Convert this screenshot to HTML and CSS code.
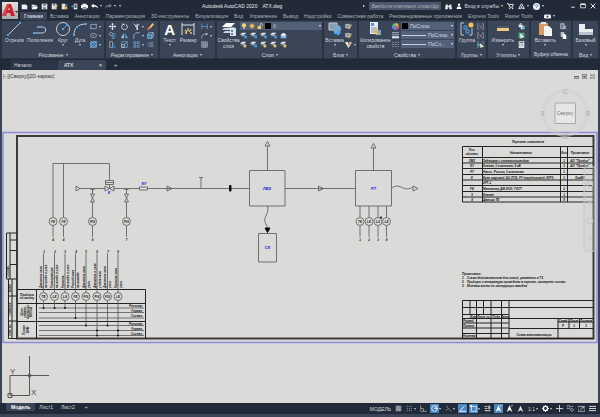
FILE: index.html
```html
<!DOCTYPE html>
<html lang="ru">
<head>
  <meta charset="UTF-8">
  <meta name="viewport" content="width=device-width, initial-scale=1.0">
  <title>Autodesk AutoCAD 2020 - АТХ.dwg</title>
  <link rel="stylesheet" href="styles.css">
</head>
<body>

<!-- Icon set -->
<svg class="sprite" aria-hidden="true">
  <symbol id="i-new" viewBox="0 0 10 10"><path d="M1 2h6l2 2v5H1z" fill="#eef1f5"/></symbol>
  <symbol id="i-open" viewBox="0 0 10 10"><path d="M1 8V2h3l1 1h3v2H3z" fill="#cfd5dd"/><path d="M3 5h7L8 9H1z" fill="#fff"/></symbol>
  <symbol id="i-save" viewBox="0 0 10 10"><path d="M1 1h8v8H1z" fill="#dfe4ea"/><path d="M3 1h4v3H3zM3 6h4v3H3z" fill="#6f7c8e"/></symbol>
  <symbol id="i-saveas" viewBox="0 0 10 10"><path d="M1 1h7v8H1z" fill="#dfe4ea"/><path d="M3 1h3v3H3z" fill="#6f7c8e"/><path d="M4 8l5-5 1 1-5 5z" fill="#e8b04c"/></symbol>
  <symbol id="i-cloud" viewBox="0 0 10 10"><path d="M1 1h5v8H1z" fill="#e6e2cf"/><path d="M5 5h4v4H5z" fill="#e0b65a"/><path d="M6 2h3v2H6z" fill="#5e9fd6"/></symbol>
  <symbol id="i-mobile" viewBox="0 0 10 10"><path d="M4 1h5v8H4z" fill="#eef1f5"/><path d="M5 2h3v5H5z" fill="#4b5a6e"/><path d="M0 5h4M2 3l2 2-2 2" stroke="#69a8dd" fill="none"/></symbol>
  <symbol id="i-print" viewBox="0 0 10 10"><path d="M2 1h6v2H2zM0 3h10v4H8v2H2V7H0z" fill="#eef1f5"/><path d="M3 6h4v2H3z" fill="#5a6678"/></symbol>
  <symbol id="i-undo" viewBox="0 0 10 10"><path d="M0 4l4-3v2c4 0 6 2 6 5-1-2-3-3-6-3v2z" fill="#fff"/></symbol>
  <symbol id="i-redo" viewBox="0 0 10 10"><path d="M10 4L6 1v2C2 3 0 5 0 8c1-2 3-3 6-3v2z" fill="#6f7b8b"/></symbol>
  <symbol id="i-binoc" viewBox="0 0 10 10"><path d="M1 2h3v2h2V2h3l1 7H6V6H4v3H0z" fill="#dfe4ea"/></symbol>
  <symbol id="i-user" viewBox="0 0 10 10"><circle cx="5" cy="3" r="2" fill="#fff"/><path d="M1 10c0-6 8-6 8 0z" fill="#fff"/></symbol>
  <symbol id="i-cart" viewBox="0 0 10 10"><path d="M0 1h2l2 5h4l1-4H3" fill="none" stroke="#e4e8ee" stroke-width="1.4"/><circle cx="4" cy="8" r="1" fill="#fff"/><circle cx="8" cy="8" r="1" fill="#fff"/></symbol>
  <symbol id="i-a360" viewBox="0 0 10 10"><path d="M5 1L1 8h3L5 5l1 3h3z" fill="none" stroke="#e4e8ee" stroke-width="1.4"/></symbol>
  <symbol id="i-help" viewBox="0 0 10 10"><circle cx="5" cy="5" r="5" fill="#eef1f5"/><path d="M3 4c0-2 4-2 4 0 0 1-2 1-2 2v1" fill="none" stroke="#2a6fae" stroke-width="1.2"/></symbol>
  <symbol id="i-min" viewBox="0 0 10 10"><path d="M2 7h6" stroke="#fff" stroke-width="1.4"/></symbol>
  <symbol id="i-max" viewBox="0 0 10 10"><path d="M1 2h8v6H1z" fill="none" stroke="#fff" stroke-width="1.2"/><path d="M1 2h8" stroke="#fff" stroke-width="2"/></symbol>
  <symbol id="i-close" viewBox="0 0 10 10"><path d="M1 1l8 8M9 1L1 9" stroke="#fff" stroke-width="1.5"/></symbol>
  <symbol id="i-cam" viewBox="0 0 10 10"><rect y="2" width="10" height="6" rx="2" fill="#eef1f5"/><circle cx="5" cy="5" r="1.4" fill="#39465a"/></symbol>

  <symbol id="i-line" viewBox="0 0 14 14"><path d="M1 13L13 1" stroke="#c9d0da"/><path d="M0 12h2v2H0zM12 0h2v2h-2z" fill="#4fa3e3"/></symbol>
  <symbol id="i-pline" viewBox="0 0 14 14"><path d="M1 11h8c5 0 5-6 0-6H5" fill="none" stroke="#c9d0da"/><path d="M0 10h2v2H0zM4 4h2v2H4z" fill="#4fa3e3"/></symbol>
  <symbol id="i-circle" viewBox="0 0 14 14"><circle cx="7" cy="7" r="6.5" fill="none" stroke="#c9d0da"/><path d="M7 7l4-4" stroke="#4fa3e3"/><path d="M6 6h2v2H6zM10 2h2v2h-2z" fill="#4fa3e3"/></symbol>
  <symbol id="i-arc" viewBox="0 0 14 14"><path d="M1 13C1 6 5 2 13 2" fill="none" stroke="#c9d0da"/><path d="M0 12h2v2H0zM3 4h2v2H3zM12 1h2v2h-2z" fill="#4fa3e3"/></symbol>
  <symbol id="i-rect" viewBox="0 0 10 10"><path d="M1 2h8v6H1z" fill="none" stroke="#b3bcc9"/><path d="M0 7h2v2H0zM8 1h2v2H8z" fill="#4fa3e3"/></symbol>
  <symbol id="i-ellipse" viewBox="0 0 10 10"><ellipse cx="5" cy="5" rx="4.5" ry="3" fill="none" stroke="#b3bcc9"/><path d="M4 4h2v2H4z" fill="#4fa3e3"/></symbol>
  <symbol id="i-hatch" viewBox="0 0 10 10"><path d="M1 1h8v8H1z" fill="#33669a" stroke="#8fc3ee"/><path d="M1 5l4-4M1 9l8-8M5 9l4-4" stroke="#9fd0f7"/></symbol>
  <symbol id="i-move" viewBox="0 0 10 10"><path d="M5 1v8M1 5h8" stroke="#fff"/><path d="M5 0l2 2H3zM5 10l2-2H3zM0 5l2-2v4zM10 5L8 3v4z" fill="#fff"/></symbol>
  <symbol id="i-rotate" viewBox="0 0 10 10"><path d="M7 2a4 4 0 1 1-4 0" fill="none" stroke="#dbe0e7" stroke-width="1.3"/><path d="M1 1h4v3z" fill="#dbe0e7"/></symbol>
  <symbol id="i-trim" viewBox="0 0 10 10"><path d="M1 1l5 5M9 2L3 5M6 1v8" stroke="#dbe0e7" stroke-width="1.3"/><path d="M5 6h2v4H5z" fill="#dbe0e7"/></symbol>
  <symbol id="i-erase" viewBox="0 0 10 10"><path d="M3 6l5-6 2 2-5 6z" fill="#efc66f"/><path d="M1 7l2-2 2 2-2 3H0z" fill="#db6a50"/></symbol>
  <symbol id="i-copy" viewBox="0 0 10 10"><circle cx="3" cy="3" r="2.3" fill="none" stroke="#b8c2ce"/><circle cx="7" cy="4" r="2" fill="none" stroke="#4fa3e3"/><circle cx="6" cy="8" r="1.6" fill="none" stroke="#69b4ee"/></symbol>
  <symbol id="i-mirror" viewBox="0 0 10 10"><path d="M4 1v8H0z" fill="#b8c2ce"/><path d="M6 1v8h4z" fill="#4fa3e3"/></symbol>
  <symbol id="i-fillet" viewBox="0 0 10 10"><path d="M1 10V7c0-4 2-6 6-6h3" fill="none" stroke="#a8b2c0"/><path d="M0 5h2v2H0zM5 0h2v2H5z" fill="#4fa3e3"/></symbol>
  <symbol id="i-explode" viewBox="0 0 10 10"><path d="M1 4h6v5H1z" fill="#2f75ae" stroke="#a9d2f2"/><path d="M1 4l2-3h6L7 4M9 1v5L7 9" fill="none" stroke="#a9d2f2"/></symbol>
  <symbol id="i-stretch" viewBox="0 0 10 10"><path d="M1 1h4v8H1z" fill="none" stroke="#b8c2ce"/><path d="M5 3l4 6H5z" fill="none" stroke="#4fa3e3"/></symbol>
  <symbol id="i-scale" viewBox="0 0 10 10"><path d="M1 1h8v8H1z" fill="none" stroke="#69b4ee"/><path d="M1 5h4v4H1zM5 5l3-3" fill="none" stroke="#c9d0da"/></symbol>
  <symbol id="i-array" viewBox="0 0 10 10"><path d="M1 1h3v3H1zM6 1h3v3H6zM1 6h3v3H1zM6 6h3v3H6z" fill="#35546f" stroke="#7ba9ce"/></symbol>
  <symbol id="i-offset" viewBox="0 0 10 10"><path d="M9 2H4C0 2 0 8 4 8h5" fill="none" stroke="#4fa3e3"/><path d="M9 4H5C3 4 3 6 5 6h4" fill="none" stroke="#c98d8d"/></symbol>
  <symbol id="i-dim" viewBox="0 0 14 14"><path d="M1 1v12M13 1v12M1 3h12" fill="none" stroke="#dbe0e7"/><path d="M4 8l2 2M10 7l-2 3M7 6v3M4 11h2M9 11h2" stroke="#efc66f" stroke-width="1.3"/></symbol>
  <symbol id="i-lindim" viewBox="0 0 10 10"><path d="M1 1v8M9 1v8M1 5h8" fill="none" stroke="#69a8dd"/></symbol>
  <symbol id="i-leader" viewBox="0 0 10 10"><path d="M1 9C1 3 4 3 9 3" fill="none" stroke="#b8c2ce"/><circle cx="8" cy="3" r="1.5" fill="#b8c2ce"/></symbol>
  <symbol id="i-table" viewBox="0 0 10 10"><path d="M1 1h8v8H1zM1 3h8M1 6h8M4 3v6M6.500 3v6" fill="#536073" stroke="#a5afbc"/></symbol>
  <symbol id="i-layers" viewBox="0 0 14 14"><path d="M3 9L1 11h8l4-2zM2 6L0 8h9l4-3z" fill="#cfd5dd"/><path d="M4 1L0 5h9l4-4z" fill="#fff"/><path d="M8 6h6v8H8z" fill="#dfe4ea"/><path d="M9 8h2v2H9zM9 11h2v2H9z" fill="#4b8fc9"/></symbol>
  <symbol id="i-layer" viewBox="0 0 10 10"><path d="M3 1L0 4h6l3-3z" fill="#e9edf1"/><path d="M2 5L1 6h4l3-2z" fill="#b3bcc9"/><path d="M6 5h4v4H6z" fill="#4a9bd1"/></symbol>
  <symbol id="i-layer2" viewBox="0 0 10 10"><path d="M3 1L0 4h6l3-3z" fill="#e9edf1"/><path d="M2 5L1 6h4l3-2z" fill="#b3bcc9"/><circle cx="7" cy="7" r="2.200" fill="#e4c06a"/></symbol>
  <symbol id="i-layer3" viewBox="0 0 10 10"><path d="M1 4l4-3 4 3v5H1z" fill="#86b5dc"/><path d="M1 4l4-3 4 3-4 2z" fill="#e9edf1"/></symbol>
  <symbol id="i-bulb" viewBox="0 0 10 10"><circle cx="5" cy="4" r="3.500" fill="#f7d774"/><path d="M4 7h2v3H4z" fill="#e9edf1"/></symbol>
  <symbol id="i-sun" viewBox="0 0 10 10"><circle cx="5" cy="5" r="3" fill="#f7c94c"/><path d="M5 0v10M0 5h10M1.500 1.500l7 7M8.500 1.500l-7 7" stroke="#f7c94c" stroke-width=".8"/></symbol>
  <symbol id="i-lock" viewBox="0 0 10 10"><path d="M1 5h6v5H1z" fill="#f3c55c"/><path d="M5 5V3c0-3 4-3 4 0v2" fill="none" stroke="#e6d7a8" stroke-width="1.200"/></symbol>
  <symbol id="i-block" viewBox="0 0 14 14"><path d="M1 1h8v7H1z" fill="#8d99a9" stroke="#c5ccd6"/><circle cx="9" cy="7" r="4" fill="#77a6cf"/><path d="M6 10h3V7l4 4-4 3v-2H6z" fill="#4fa3e3"/></symbol>
  <symbol id="i-blk" viewBox="0 0 10 10"><path d="M1 2h6v5H1z" fill="#8794a5" stroke="#d4dae2"/><path d="M4 8l5-6 1 1-4 6z" fill="#e7b65b"/></symbol>
  <symbol id="i-heart" viewBox="0 0 10 10"><path d="M0 2l5 8 5-8-3-1-2 2-2-2z" fill="#dfe4ea"/><path d="M4 4l4-3 1 2-4 4z" fill="#d58c5d"/></symbol>
  <symbol id="i-match" viewBox="0 0 14 14"><path d="M2 0h8v12H2z" fill="#e9edf1"/><path d="M3 1h3v3H3z" fill="#4b9bd9"/><path d="M3 6h6M3 8h6M3 10h4" stroke="#8391a3"/><path d="M8 8h5v5H8z" fill="#6fa7d6"/><path d="M6 9l3-2 2 5-3 1z" fill="#e7b65b"/></symbol>
  <symbol id="i-wheel" viewBox="0 0 10 10"><path d="M5 5V0a5 5 0 0 1 4.500 3z" fill="#f2d24b"/><path d="M5 5l4.500-2A5 5 0 0 1 8 9z" fill="#e5694e"/><path d="M5 5l3 4a5 5 0 0 1-5 .5z" fill="#a35fd0"/><path d="M5 5L3 9.500A5 5 0 0 1 .3 3.500z" fill="#4b9bd9"/><path d="M5 5L.3 3.500A5 5 0 0 1 5 0z" fill="#5fc27b"/></symbol>
  <symbol id="i-weight" viewBox="0 0 10 10"><path d="M0 1h10M0 4h10" stroke="#dfe4ea"/><path d="M0 6h10v3H0z" fill="#dfe4ea"/></symbol>
  <symbol id="i-ltype" viewBox="0 0 10 10"><path d="M0 2h10M0 5h10M0 8h10" stroke="#98a3b2" stroke-dasharray="3 1"/></symbol>
  <symbol id="i-group" viewBox="0 0 14 14"><path d="M4 1H1v12h3M9 13h3V6" fill="none" stroke="#b8c2ce"/><path d="M4 4h3v3H4zM6 8h3v3H6z" fill="none" stroke="#4fa3e3"/><circle cx="11" cy="3" r="2.500" fill="#f3c55c"/></symbol>
  <symbol id="i-ungroup" viewBox="0 0 10 10"><path d="M3 1H1v8h2M7 1h2v8H7" fill="none" stroke="#87a7c4"/><path d="M3 3l4 5M7 3L4 7" stroke="#d77d6c"/></symbol>
  <symbol id="i-grsel" viewBox="0 0 10 10"><path d="M3 1H1v8h2M7 1h2v4" fill="none" stroke="#87a7c4"/><path d="M4 3l6 5-3 1-2 1z" fill="#e9f3e4"/><path d="M1 4h3v3H1z" fill="#5db584"/></symbol>
  <symbol id="i-ruler" viewBox="0 0 14 14"><path d="M1 6h12v3H1z" fill="#edc77b"/><path d="M1 5h12" stroke="#5c6676"/></symbol>
  <symbol id="i-qsel" viewBox="0 0 10 10"><path d="M1 2h5v4H1zM4 4h5v5H4z" fill="#e9edf1"/><path d="M6 5h4v3H6z" fill="#4b9bd9"/><path d="M2 0h3v3z" fill="#e7b65b"/></symbol>
  <symbol id="i-sel" viewBox="0 0 10 10"><path d="M1 1h8v8H1z" fill="#53b285"/><path d="M3 2l6 5-3 .5L4 10z" fill="#fff"/></symbol>
  <symbol id="i-calc" viewBox="0 0 10 10"><path d="M1 0h8v10H1z" fill="#dfe4ea"/><path d="M2 1h6v2H2z" fill="#54806b"/><path d="M2 5h6M2 7h6" stroke="#5d6b7d" stroke-dasharray="1 1"/></symbol>
  <symbol id="i-paste" viewBox="0 0 14 14"><path d="M1 1h9v12H1z" fill="#d59b63"/><path d="M3 0h5v2H3z" fill="#dfe4ea"/><path d="M6 4h5l3 3v7H6z" fill="#f2f4f7"/></symbol>
  <symbol id="i-cut" viewBox="0 0 10 10"><path d="M1 1h5v7H1z" fill="#6d7a8c" stroke="#cbd2db"/><path d="M5 4l4 5M9 4L5 9" stroke="#dfe4ea"/></symbol>
  <symbol id="i-clip" viewBox="0 0 10 10"><path d="M1 0h5v7H1z" fill="#b9c2cd"/><path d="M4 3h3l2 2v5H4z" fill="#fff"/></symbol>
  <symbol id="i-view" viewBox="0 0 14 14"><path d="M0 2h6v5h8v6H0z" fill="#e9edf1"/><path d="M0 10h14v3H0z" fill="#b9c2cd"/></symbol>

  <symbol id="i-grid" viewBox="0 0 10 10"><path d="M1 1h8v8H1z" fill="#7d8896"/><path d="M4 1v8M6.500 1v8M1 4h8M1 6.500h8" stroke="#a7b0bc" stroke-width=".6"/></symbol>
  <symbol id="i-snap" viewBox="0 0 10 10"><path d="M1 2h9M1 5h9M1 8h9" stroke="#8f99a7" stroke-width="1.300" stroke-dasharray="1.500 1.500"/></symbol>
  <symbol id="i-ortho" viewBox="0 0 10 10"><path d="M1 0v9h9M1 5h4v4" fill="none" stroke="#a7b0bc"/></symbol>
  <symbol id="i-polar" viewBox="0 0 10 10"><circle cx="5" cy="5" r="4" fill="none" stroke="#fff"/><path d="M10 5H5l4-5" fill="none" stroke="#fff"/></symbol>
  <symbol id="i-iso" viewBox="0 0 10 10"><path d="M2 1l3 4 4 4M5 5L1 8" fill="none" stroke="#98a3b2"/></symbol>
  <symbol id="i-track" viewBox="0 0 10 10"><path d="M10 9H1l7-8" fill="none" stroke="#fff" stroke-width="1.300"/></symbol>
  <symbol id="i-osnap" viewBox="0 0 10 10"><path d="M2 2h7v7H2z" fill="none" stroke="#fff"/><path d="M0 0h3v3H0z" fill="#dcefff"/></symbol>
  <symbol id="i-lwt" viewBox="0 0 10 10"><path d="M1 2h4M1 5h4M1 8h8" stroke="#b3bcc9" stroke-width="1.500"/><path d="M6 1h3v5H6z" fill="#b3bcc9"/></symbol>
  <symbol id="i-anno" viewBox="0 0 10 10"><path d="M5 0l4 10-4-3-4 3z" fill="#fff"/><path d="M7 2l3-2" stroke="#fff"/></symbol>
  <symbol id="i-anno2" viewBox="0 0 10 10"><path d="M5 1l4 9-4-3-4 3z" fill="#e4e8ee"/></symbol>
  <symbol id="i-gear" viewBox="0 0 10 10"><circle cx="5" cy="5" r="3" fill="none" stroke="#fff" stroke-width="2"/><path d="M5 0v2M5 8v2M0 5h2M8 5h2M1.500 1.500l1 1M7.500 7.500l1 1M8.500 1.500l-1 1M1.500 8.500l1-1" stroke="#fff" stroke-width="1.300"/></symbol>
  <symbol id="i-plus" viewBox="0 0 10 10"><path d="M5 0v10M0 5h10" stroke="#c9d0da" stroke-width="1.400"/></symbol>
  <symbol id="i-iso2" viewBox="0 0 10 10"><path d="M0 1h4v4H0zM5 2h4" fill="none" stroke="#b3bcc9"/><circle cx="7" cy="7" r="2" fill="none" stroke="#b3bcc9"/></symbol>
  <symbol id="i-full" viewBox="0 0 10 10"><path d="M0 2h10v7H0z" fill="none" stroke="#c9d0da"/><path d="M3 7l5-4M5 3h3v2" fill="none" stroke="#c9d0da"/></symbol>
  <symbol id="i-burger" viewBox="0 0 10 10"><path d="M0 2h10M0 5h10M0 8h10" stroke="#e4e8ee" stroke-width="1.300"/></symbol>
</svg>

<header class="top">
  <button class="logo" aria-label="Меню приложения">
    <svg viewBox="0 0 16 17"><path d="M5 2h4l4 12H9l-1-3H5l-1 3H0zM7 5L6 8h2z" fill="#c8202c" fill-rule="evenodd"/><path d="M5 2h2L3 14H0z" fill="#e4404a"/><path d="M13 9h3l-1.500 2z" fill="#333"/></svg>
  </button>
  <div class="titlebar">
    <div class="quick">
      <button class="ico" aria-label="Создать"><svg><use href="#i-new"/></svg></button>
      <button class="ico" aria-label="Открыть"><svg><use href="#i-open"/></svg></button>
      <button class="ico" aria-label="Сохранить"><svg><use href="#i-save"/></svg></button>
      <button class="ico" aria-label="Сохранить как"><svg><use href="#i-saveas"/></svg></button>
      <button class="ico" aria-label="Открыть из веб"><svg><use href="#i-cloud"/></svg></button>
      <button class="ico" aria-label="Сохранить в веб"><svg><use href="#i-mobile"/></svg></button>
      <button class="ico" aria-label="Печать"><svg><use href="#i-print"/></svg></button>
      <button class="ico drop" aria-label="Отменить"><svg><use href="#i-undo"/></svg></button>
      <button class="ico drop" aria-label="Повторить"><svg><use href="#i-redo"/></svg></button>
      <button class="drop" aria-label="Настройка панели"></button>
    </div>
    <div class="app-title"><span>Autodesk AutoCAD 2020</span><span>АТХ.dwg</span></div>
    <div class="account">
      <span class="play"></span>
      <input class="search" type="text" aria-label="Поиск" placeholder="Введите ключевое слово/фразу">
      <button class="ico" aria-label="Найти"><svg><use href="#i-binoc"/></svg></button>
      <button class="signin drop"><svg><use href="#i-user"/></svg>Вход в службы</button>
      <button class="ico" aria-label="Магазин"><svg><use href="#i-cart"/></svg></button>
      <button class="ico drop" aria-label="Autodesk App Store"><svg><use href="#i-a360"/></svg></button>
      <button class="ico drop" aria-label="Справка"><svg><use href="#i-help"/></svg></button>
    </div>
    <div class="window-buttons">
      <button class="ico" aria-label="Свернуть"><svg><use href="#i-min"/></svg></button>
      <button class="ico" aria-label="Развернуть"><svg><use href="#i-max"/></svg></button>
      <button class="ico" aria-label="Закрыть"><svg><use href="#i-close"/></svg></button>
    </div>
  </div>
  <nav class="menu">
    <a href="#" class="active">Главная</a>
    <a href="#">Вставка</a>
    <a href="#">Аннотации</a>
    <a href="#">Параметризация</a>
    <a href="#">3D-инструменты</a>
    <a href="#">Визуализация</a>
    <a href="#">Вид</a>
    <a href="#">Управление</a>
    <a href="#">Вывод</a>
    <a href="#">Надстройки</a>
    <a href="#">Совместная работа</a>
    <a href="#">Рекомендованные приложения</a>
    <a href="#">Express Tools</a>
    <a href="#">Raster Tools</a>
    <button class="ico drop" aria-label="Вид ленты"><svg><use href="#i-cam"/></svg></button>
  </nav>
</header>

<main class="ribbon">
  <section class="panel">
    <div class="tools">
      <button class="big"><svg><use href="#i-line"/></svg>Отрезок</button>
      <button class="big"><svg><use href="#i-pline"/></svg>Полилиния</button>
      <button class="big down"><svg><use href="#i-circle"/></svg>Круг</button>
      <button class="big down"><svg><use href="#i-arc"/></svg>Дуга</button>
      <div class="small">
        <button class="ico drop" aria-label="Прямоугольник"><svg><use href="#i-rect"/></svg></button>
        <button class="ico drop" aria-label="Эллипс"><svg><use href="#i-ellipse"/></svg></button>
        <button class="ico drop" aria-label="Штриховка"><svg><use href="#i-hatch"/></svg></button>
      </div>
    </div>
    <button class="panel-title drop">Рисование</button>
  </section>

  <section class="panel">
    <div class="tools">
      <div class="small four">
        <button class="ico" aria-label="Перенести"><svg><use href="#i-move"/></svg></button>
        <button class="ico" aria-label="Повернуть"><svg><use href="#i-rotate"/></svg></button>
        <button class="ico drop" aria-label="Обрезать"><svg><use href="#i-trim"/></svg></button>
        <button class="ico" aria-label="Стереть"><svg><use href="#i-erase"/></svg></button>
        <button class="ico" aria-label="Копировать"><svg><use href="#i-copy"/></svg></button>
        <button class="ico" aria-label="Зеркало"><svg><use href="#i-mirror"/></svg></button>
        <button class="ico drop" aria-label="Сопряжение"><svg><use href="#i-fillet"/></svg></button>
        <button class="ico" aria-label="Расчленить"><svg><use href="#i-explode"/></svg></button>
        <button class="ico" aria-label="Растянуть"><svg><use href="#i-stretch"/></svg></button>
        <button class="ico" aria-label="Масштаб"><svg><use href="#i-scale"/></svg></button>
        <button class="ico drop" aria-label="Массив"><svg><use href="#i-array"/></svg></button>
        <button class="ico" aria-label="Подобие"><svg><use href="#i-offset"/></svg></button>
      </div>
    </div>
    <button class="panel-title drop">Редактирование</button>
  </section>

  <section class="panel">
    <div class="tools">
      <button class="big down"><span class="letter">A</span>Текст</button>
      <button class="big"><svg><use href="#i-dim"/></svg>Размер</button>
      <div class="small">
        <button class="ico drop" aria-label="Линейный"><svg><use href="#i-lindim"/></svg></button>
        <button class="ico drop" aria-label="Выноска"><svg><use href="#i-leader"/></svg></button>
        <button class="ico" aria-label="Таблица"><svg><use href="#i-table"/></svg></button>
      </div>
    </div>
    <button class="panel-title drop">Аннотации</button>
  </section>

  <section class="panel">
    <div class="tools">
      <button class="big"><svg><use href="#i-layers"/></svg>Свойства<br>слоя</button>
      <div class="layer-box">
        <div class="combo">
          <svg><use href="#i-bulb"/></svg>
          <svg><use href="#i-sun"/></svg>
          <svg><use href="#i-lock"/></svg>
          <span class="swatch"></span>
          <select aria-label="Слой"><option>0</option></select>
        </div>
        <div class="layer-tools">
          <button class="ico" aria-label="Отключить"><svg><use href="#i-layer"/></svg></button>
          <button class="ico" aria-label="Изолировать"><svg><use href="#i-layer"/></svg></button>
          <button class="ico" aria-label="Заморозить"><svg><use href="#i-layer"/></svg></button>
          <button class="ico" aria-label="Блокировать"><svg><use href="#i-layer"/></svg></button>
          <button class="ico" aria-label="Сделать текущим"><svg><use href="#i-layer3"/></svg></button>
          <button class="ico" aria-label="Включить все слои"><svg><use href="#i-layer2"/></svg></button>
          <button class="ico" aria-label="Отменить изоляцию"><svg><use href="#i-layer"/></svg></button>
          <button class="ico" aria-label="Разморозить"><svg><use href="#i-layer2"/></svg></button>
          <button class="ico" aria-label="Разблокировать"><svg><use href="#i-layer2"/></svg></button>
          <button class="ico" aria-label="Копировать слой"><svg><use href="#i-layer2"/></svg></button>
        </div>
      </div>
    </div>
    <button class="panel-title drop">Слои</button>
  </section>

  <section class="panel">
    <div class="tools">
      <button class="big down"><svg><use href="#i-block"/></svg>Вставка</button>
      <div class="small">
        <button class="ico" aria-label="Создать блок"><svg><use href="#i-blk"/></svg></button>
        <button class="ico" aria-label="Редактор блоков"><svg><use href="#i-blk"/></svg></button>
        <button class="ico drop" aria-label="Атрибуты"><svg><use href="#i-heart"/></svg></button>
      </div>
    </div>
    <button class="panel-title drop">Блок</button>
  </section>

  <section class="panel">
    <div class="tools">
      <button class="big"><svg><use href="#i-match"/></svg>Копирование<br>свойств</button>
      <div class="props">
        <svg><use href="#i-wheel"/></svg>
        <div class="combo"><span class="swatch"></span><select aria-label="Цвет"><option>ПоСлою</option></select></div>
        <svg><use href="#i-weight"/></svg>
        <div class="combo lined"><select aria-label="Вес линий"><option>ПоСлою</option></select></div>
        <svg><use href="#i-ltype"/></svg>
        <div class="combo lined"><select aria-label="Тип линий"><option>ПоСл...</option></select></div>
      </div>
    </div>
    <button class="panel-title drop">Свойства</button>
  </section>

  <section class="panel">
    <div class="tools">
      <button class="big"><svg><use href="#i-group"/></svg>Группа</button>
      <div class="small">
        <button class="ico" aria-label="Разгруппировать"><svg><use href="#i-ungroup"/></svg></button>
        <button class="ico" aria-label="Редактировать группу"><svg><use href="#i-ungroup"/></svg></button>
        <button class="ico" aria-label="Выбор группы"><svg><use href="#i-grsel"/></svg></button>
      </div>
    </div>
    <button class="panel-title drop">Группы</button>
  </section>

  <section class="panel">
    <div class="tools">
      <button class="big down"><svg><use href="#i-ruler"/></svg>Измерить</button>
      <div class="small">
        <button class="ico" aria-label="Быстрый выбор"><svg><use href="#i-qsel"/></svg></button>
        <button class="ico" aria-label="Выбрать все"><svg><use href="#i-sel"/></svg></button>
        <button class="ico" aria-label="Калькулятор"><svg><use href="#i-calc"/></svg></button>
      </div>
    </div>
    <button class="panel-title drop">Утилиты</button>
  </section>

  <section class="panel">
    <div class="tools">
      <button class="big down"><svg><use href="#i-paste"/></svg>Вставить</button>
      <div class="small">
        <button class="ico" aria-label="Вырезать"><svg><use href="#i-cut"/></svg></button>
        <button class="ico" aria-label="Копировать в буфер"><svg><use href="#i-clip"/></svg></button>
      </div>
    </div>
    <button class="panel-title">Буфер обмена</button>
  </section>

  <section class="panel">
    <div class="tools">
      <button class="big down"><svg><use href="#i-view"/></svg>Базовый</button>
    </div>
    <button class="panel-title drop">Вид</button>
  </section>
</main>

<nav class="file-tabs">
  <a href="#">Начало</a>
  <a href="#" class="active">АТХ <span>×</span></a>
  <button aria-label="Новый чертеж">+</button>
</nav>

<div class="canvas">
  <div class="viewport-bar">
    <button>[−][Сверху][2D-каркас]</button>
    <span class="viewport-buttons">
      <button aria-label="Свернуть вид"><svg viewBox="0 0 6 6"><path d="M0 3h6v2H0z" fill="none" stroke="#555"/></svg></button>
      <button aria-label="Восстановить вид"><svg viewBox="0 0 6 6"><path d="M0 1h6v5H0zM2 3h2v1H2z" fill="none" stroke="#555"/></svg></button>
      <button aria-label="Закрыть вид"><svg viewBox="0 0 6 6"><path d="M0 0h6v6H0zM1 1l4 4M5 1L1 5" fill="none" stroke="#666" stroke-width=".8"/></svg></button>
    </span>
  </div>

  <svg class="drawing" viewBox="2 70 596 333">
    <!-- sheet -->
    <path class="sheet-edge" d="M3 132.500h594v210H3z"/>
    <path class="frame" d="M17 136h576.500v202.500H17z"/>

    <!-- piping -->
    <g class="thin">
      <path d="M53 217.500v-54h56.500V180M63.500 163.500v54M105.500 180.500h8v4h-8zM105.500 182.500h8M109.500 184v4"/>
      <path d="M80 188.500h25M114 188.500h25M148 188.500h101.500M285 188.500h70.500M139.500 187h8v3h-8z"/>
      <path d="M76 186l4 2.500-4 2.500zM167 186l5 2.500-5 2.500zM318.500 186l5 2.500-5 2.500zM413 186l5 2.500-5 2.500z"/>
      <path d="M105 186v5l9-5v5zM90.500 189.500h4M92.500 189.500v4.500h-2l4 8h-4l4-8h-2M92.500 202v15.500M124.500 189.500h4M126.500 189.500v4.500h-2l4 8h-4l4-8h-2M126.500 202v15.500"/>
      <path d="M199 177.500h4M201 177.500v11"/>
      <path d="M249.500 170.500H285v35.500h-35.500zM355.500 170.500H391.500v35.500h-36zM258.500 233.500h18v28.500h-18z"/>
      <path d="M267.500 170.500V146M265 146l2.500-4.500 2.500 4.500zM373.500 170.500V148M371 148l2.500-4.500 2.500 4.500z"/>
      <path d="M267.500 206c2 8-4 10-2.500 16 1 3 2 3 2.500 6"/>
      <path d="M391.500 188.500c5-5 10-1 13 0s5 0 8-1"/>
      <path d="M53 225.500V237M63.500 225.500V237M92.500 225.500V237M126.500 225.500V237"/>
      <path d="M360 206v11.500M369 206v11.500M378 206v11.500M386.500 206v11.500M360 225.500V237M369 225.500V237M378 225.500V237M386.500 225.500V237"/>
    </g>
    <path d="M229.500 185.500h1.500v5.500h-1.500zM265 228h5l-2.500 4.500z" stroke="#111"/>
    <g class="dial">
      <circle cx="53" cy="221.500" r="4"/><circle cx="63.500" cy="221.500" r="4"/><circle cx="92.500" cy="221.500" r="4"/><circle cx="126.500" cy="221.500" r="4"/>
      <circle cx="360" cy="221.500" r="4"/><circle cx="369" cy="221.500" r="4"/><circle cx="378" cy="221.500" r="4"/><circle cx="386.500" cy="221.500" r="4"/>
    </g>
    <circle cx="381" cy="217.500" r="1" fill="#111"/>
    <g class="note mid">
      <text x="53" y="223">FE</text><text x="63.500" y="223">FE</text><text x="92.500" y="223">PIS</text><text x="126.500" y="223">PIS</text>
      <text x="360" y="223">TE</text><text x="369" y="223">LE</text><text x="378" y="223">LS</text><text x="386.500" y="223">LE</text>
      <text x="53" y="241">4</text><text x="63.500" y="241">4</text><text x="92.500" y="241">6</text><text x="126.500" y="241">7</text>
      <text x="360" y="241">1</text><text x="369" y="241">2</text><text x="378" y="241">3</text><text x="386.500" y="241">8</text>
    </g>
    <g class="tag">
      <text x="109" y="194">К</text><text x="144" y="185">КУ</text><text x="267" y="190">ЛВЗ</text><text x="373.500" y="190">Р7</text><text x="267.500" y="249">СК</text>
    </g>

    <!-- left stamps -->
    <path class="rule" d="M17 233H6.500v46H17M10 233v46M10 240h7M10 250.500h7M10 264.500h7M8.500 279v59.500H17M12 279v59.500M8.500 296h8.500M8.500 321h8.500"/>
    <g class="note mid">
      <text transform="translate(9 271) rotate(-90)">Соглас.</text>
      <text transform="translate(11 288) rotate(-90)">Взам.</text>
      <text transform="translate(11 309) rotate(-90)">Подпись</text>
      <text transform="translate(11 330) rotate(-90)">Инв. №</text>
    </g>

    <!-- instrument table -->
    <path class="rule" d="M17 289.500h128.500v49M17 303.500h128.500M17 321.500h128.500M36.500 289.500v49"/>
    <path class="thin" d="M39 308h105M39 312.500h105M39 318h105M39 325.500h105M39 330.500h105M39 335.500h105"/>
    <path class="thin" d="M43.500 253.500v39M54.500 253.500v39M65 253.500v39M75.500 253.500v39M86 253.500v39M97 253.500v39M107.500 253.500v39M118 253.500v39M43.500 300.500V308M54.500 300.500V308M65 300.500V308M75.500 300.500V318M86 300.500v25M97 300.500v35M107.500 300.500v25M118 300.500v35"/>
    <g class="dial">
      <circle cx="43.500" cy="296.500" r="4"/><circle cx="54.500" cy="296.500" r="4"/><circle cx="65" cy="296.500" r="4"/><circle cx="75.500" cy="296.500" r="4"/>
      <circle cx="86" cy="296.500" r="4"/><circle cx="97" cy="296.500" r="4"/><circle cx="107.500" cy="296.500" r="4"/><circle cx="118" cy="296.500" r="4"/>
    </g>
    <path class="dots" d="M43.500 308h0M54.500 308h0M65 308h0M75.500 318h0M86 325.500h0M97 330.500h0M97 335.500h0M107.500 325.500h0M118 330.500h0M118 335.500h0"/>
    <g class="note mid">
      <text x="43.500" y="298">TE</text><text x="54.500" y="298">LE</text><text x="65" y="298">LS</text><text x="75.500" y="298">FE</text>
      <text x="86" y="298">PIS</text><text x="97" y="298">PIS</text><text x="107.500" y="298">PIS</text><text x="118" y="298">LE</text>
      <text x="44" y="253">1</text><text x="55" y="253">2</text><text x="65" y="253">3</text><text x="76" y="253">4</text>
      <text x="86" y="253">5</text><text x="97" y="253">6</text><text x="108" y="253">7</text><text x="118" y="253">8</text>
      <text x="27" y="296">Приборы</text><text x="27" y="299">по месту</text>
      <text transform="translate(23 312) rotate(-90)">Щит</text><text transform="translate(26 312) rotate(-90)">управл.</text><text transform="translate(29 312) rotate(-90)">приборы</text><text transform="translate(32 312) rotate(-90)">КИПиА</text>
      <text transform="translate(25 330) rotate(-90)">Пульт</text><text transform="translate(29 330) rotate(-90)">АРМ</text>
      <text x="136" y="307">Регистр.</text><text x="137" y="312">Управл.</text><text x="137" y="317">Сигнал.</text>
      <text x="136" y="325">Регистр.</text><text x="137" y="330">Управл.</text><text x="137" y="335">Сигнал.</text>
    </g>
    <g class="note">
      <text transform="translate(42 288) rotate(-90)">Давление газа</text><text transform="translate(47 288) rotate(-90)">на входе в узел</text>
      <text transform="translate(53 288) rotate(-90)">Температура</text><text transform="translate(58 288) rotate(-90)">на входе в узел</text>
      <text transform="translate(64 288) rotate(-90)">Уровень</text><text transform="translate(69 288) rotate(-90)">на входе в узел</text>
      <text transform="translate(74 288) rotate(-90)">Расход газа</text><text transform="translate(79 288) rotate(-90)">на выходе</text>
      <text transform="translate(85 288) rotate(-90)">Давление газа</text><text transform="translate(90 288) rotate(-90)">узел</text>
      <text transform="translate(96 288) rotate(-90)">Давление в узле</text><text transform="translate(101 288) rotate(-90)">учета газа</text>
      <text transform="translate(106 288) rotate(-90)">Давление газа</text><text transform="translate(111 288) rotate(-90)">узел</text>
      <text transform="translate(117 288) rotate(-90)">Уровень газа</text><text transform="translate(122 288) rotate(-90)">узел</text>
    </g>

    <!-- element list -->
    <path class="rule" d="M462.500 146.500h131M462.500 157.500h131M462.500 163h131M462.500 168.500h131M462.500 174.500h131M462.500 180h131M462.500 185.500h131M462.500 191.500h131M462.500 197h131M462.500 202h131M462.500 146.500V202M482.500 146.500V202M560.500 146.500V202M567.500 146.500V202"/>
    <text class="head" x="528" y="143">Перечень элементов</text>
    <g class="note mid">
      <text x="472" y="151">Поз.</text><text x="472" y="154.500">обознач.</text><text x="521" y="153.500">Наименование</text><text x="564" y="153.500">Кол</text><text x="580" y="153.500">Примечание</text>
      <text x="472" y="161.500">ЛВЗ</text><text x="472" y="167">КУ</text><text x="472" y="172.500">Р7</text><text x="472" y="178.500">К</text><text x="472" y="189.500">FE</text><text x="472" y="195.500">5</text><text x="472" y="201">8</text>
      <text x="564" y="161.500">1</text><text x="564" y="167">1</text><text x="564" y="172.500">1</text><text x="564" y="178.500">1</text><text x="564" y="189.500">2</text><text x="564" y="195.500">1</text><text x="564" y="201">8</text>
      <text x="580" y="161.500">АО "Прибор"</text><text x="580" y="167">АО "Прибор"</text><text x="580" y="178.500">КлаВВ</text>
    </g>
    <g class="note">
      <text x="483" y="161.500">Задвижка с электроприводом</text>
      <text x="483" y="167">Клапан, 1 комплект, 6 кВ</text>
      <text x="483" y="172.500">Насос, Россия, 1 комплект</text>
      <text x="483" y="178.500">Кран шаровой 11б (ПЭ), РУ трубопровод, 50РЗ</text>
      <text x="483" y="184">2РТ-1</text>
      <text x="483" y="189.500">Манометр ДМ 2010, ГОСТ</text>
      <text x="483" y="195.500">Клапан</text>
      <text x="483" y="201">Датчик ТЕ</text>
    </g>

    <!-- notes -->
    <g class="note">
      <text x="462" y="274.500">Примечание:</text>
      <text x="462" y="279">1</text><text x="467" y="279">Схема действительна для линий, указанных в ТЗ</text>
      <text x="462" y="283">2</text><text x="467" y="283">Приборы и аппаратура приведены в перечне, смотреть листы</text>
      <text x="462" y="287">3</text><text x="467" y="287">Монтаж вести по инструкции заводов</text>
    </g>

    <!-- title block -->
    <path class="rule" d="M462.500 338.500v-38h131M462.500 307.500h46M509 307.500h84.500M462.500 314.500h46M462.500 318.500h131M462.500 323h46M462.500 328h46M462.500 333.500h46M462.500 338.500h131M509 328.500h84.500M470 300.500v14M476.500 300.500v38M483.500 300.500v14M491 300.500v38M501.500 300.500v38M509 300.500v38M558 318.500v20M558 322h35.500M569 318.500v10M579.500 318.500v10"/>
    <g class="note mid">
      <text x="473" y="317.500">Изм</text><text x="481" y="317.500">Лист</text><text x="488" y="317.500">№</text><text x="496" y="317.500">Подп</text><text x="505" y="317.500">Дата</text>
      <text x="563" y="321.500">Стад</text><text x="574" y="321.500">Лист</text><text x="586" y="321.500">Листов</text>
      <text x="563" y="326.500">Р</text><text x="574" y="326.500">1</text><text x="586" y="326.500">1</text>
      <text x="534" y="336">Схема автоматизации</text>
    </g>
    <g class="note"><text x="463" y="322">Разраб.</text><text x="463" y="327">Провер.</text><text x="463" y="337">Н.контр.</text></g>

    <!-- view cube and navigation bar -->
    <circle class="ring" cx="565" cy="113" r="22"/>
    <path class="cube" d="M555 103h20.500v20.500H555z"/>
    <g class="compass"><text x="565" y="94">С</text><text x="542" y="116">З</text><text x="588" y="116">В</text><text x="565" y="139">Ю</text></g>
    <text class="cube-label" x="565" y="115">Сверху</text>
    <rect class="navbar" x="584" y="167" width="12" height="84" rx="2"/>
    <g class="nav-icons"><circle cx="590" cy="184" r="3"/><path d="M588 203h4M590 201v4M588 236l4 4M592 236l-4 4"/><circle cx="590" cy="221" r="3"/></g>

    <!-- UCS icon -->
    <g class="ucs"><path d="M10 395.500v-20h39M10 395.500h19.500V356M8 393.500h4v4H8z"/><circle cx="29.500" cy="375.500" r="1.500"/></g>
    <g class="axis"><text x="10" y="374">Y</text><text x="31" y="395">X</text></g>
  </svg>
</div>

<footer class="bottom">
  <nav class="sheets">
    <a href="#" class="active">Модель</a>
    <a href="#">Лист1</a>
    <a href="#">Лист2</a>
    <button aria-label="Новый лист">+</button>
  </nav>
  <div class="status">
    <button>МОДЕЛЬ</button>
    <button class="ico" aria-label="Сетка"><svg><use href="#i-grid"/></svg></button>
    <button class="ico drop" aria-label="Шаг"><svg><use href="#i-snap"/></svg></button>
    <button class="ico" aria-label="Орто"><svg><use href="#i-ortho"/></svg></button>
    <button class="ico drop on" aria-label="Полярное отслеживание"><svg><use href="#i-polar"/></svg></button>
    <button class="ico drop" aria-label="Изометрия"><svg><use href="#i-iso"/></svg></button>
    <button class="ico on" aria-label="Отслеживание"><svg><use href="#i-track"/></svg></button>
    <button class="ico drop on" aria-label="Привязка"><svg><use href="#i-osnap"/></svg></button>
    <button class="ico" aria-label="Вес линий"><svg><use href="#i-lwt"/></svg></button>
    <button class="ico on" aria-label="Аннотативность"><svg><use href="#i-anno"/></svg></button>
    <button class="ico" aria-label="Автомасштаб"><svg><use href="#i-anno"/></svg></button>
    <button class="ico" aria-label="Масштаб аннотаций"><svg><use href="#i-anno2"/></svg></button>
    <button class="drop">1:1</button>
    <button class="ico drop" aria-label="Рабочее пространство"><svg><use href="#i-gear"/></svg></button>
    <button class="ico" aria-label="Монитор аннотаций"><svg><use href="#i-plus"/></svg></button>
    <button class="ico" aria-label="Изоляция объектов"><svg><use href="#i-iso2"/></svg></button>
    <button class="ico" aria-label="Полный экран"><svg><use href="#i-full"/></svg></button>
    <button class="ico" aria-label="Адаптация"><svg><use href="#i-burger"/></svg></button>
  </div>
</footer>

</body>
</html>
```

FILE: styles.css
```css
* {
  box-sizing: border-box;
}
body {
  margin: 0;
  min-height: 100vh;
  background: #3b4558;
  color: #d3d8df;
  font-family: "Liberation Sans", Arial, sans-serif;
  font-size: 5px;
  line-height: 6px;
}
button, input, select {
  margin: 0;
  padding: 0;
  border: 0;
  background: none;
  color: inherit;
  font: inherit;
}
a {
  color: inherit;
  text-decoration: none;
}
svg {
  display: block;
  flex: none;
}
.sprite {
  position: absolute;
  width: 0;
  height: 0;
}
.ico {
  display: flex;
  align-items: center;
}
.ico svg {
  width: 7px;
  height: 7px;
}

/* small triangle after a control */
.drop {
  display: flex;
  align-items: center;
  gap: 2px;
}
.drop::after {
  content: "";
  border: 1px solid transparent;
  border-top: 2px solid #c9d0da;
  border-bottom: 0;
}

/* title bar and menu */
.top {
  display: grid;
  grid-template-columns: 18px 1fr;
  grid-template-rows: 12px 8px;
  background: #222a37;
}
.logo {
  grid-row: 1 / 3;
  margin: 2px 0 1px 2px;
  background: linear-gradient(#e3e3e3, #aaa);
}
.logo svg {
  width: 16px;
  height: 17px;
}
.titlebar {
  display: flex;
  align-items: center;
  padding: 0 4px 0 3px;
}
.quick {
  display: flex;
  align-items: center;
  gap: 3px;
}
.app-title {
  display: flex;
  gap: 5px;
  margin: 0 auto;
  color: #e8ebef;
}
.account {
  display: flex;
  align-items: center;
  gap: 4px;
}
.play {
  border: 1px solid transparent;
  border-left: 2px solid #fff;
  border-right: 0;
}
.search {
  width: 72px;
  height: 8px;
  padding: 0 2px;
  background: #4a566b;
  font-style: italic;
}
.search::placeholder {
  color: #a9b2c0;
}
.signin svg {
  width: 6px;
  height: 6px;
}
.window-buttons {
  display: flex;
  gap: 4px;
  margin-left: 26px;
}
.window-buttons svg {
  width: 6px;
  height: 6px;
}
.menu {
  display: flex;
  align-items: stretch;
  padding-left: 2px;
  color: #a9b2bf;
  line-height: 8px;
  white-space: nowrap;
}
.menu a {
  padding: 0 3px;
}
.menu .active {
  padding: 0 4px;
  background: #3b4558;
  color: #e8ebef;
}
.menu .drop {
  margin-left: 8px;
}

/* ribbon */
.ribbon {
  display: grid;
  grid-template-columns: 103fr 52fr 56fr 106fr 33fr 97fr 29fr 41fr 41fr 25fr;
  gap: 2px;
  padding: 1px 2px;
  background: #2a3342;
}
.panel {
  display: flex;
  flex-direction: column;
  min-width: 0;
  background: #3b4558;
}
.tools {
  display: flex;
  justify-content: space-evenly;
  height: 30px;
}
.big {
  display: flex;
  flex-direction: column;
  align-items: center;
  justify-content: flex-start;
  padding-top: 1px;
  line-height: 6px;
}
.big svg {
  width: 14px;
  height: 14px;
  margin-bottom: 1px;
}
.letter {
  height: 15px;
  color: #fff;
  font-size: 15px;
  font-weight: bold;
  line-height: 15px;
}
.down::after {
  content: "";
  margin-top: 1px;
  border: 1px solid transparent;
  border-top: 2px solid #c9d0da;
  border-bottom: 0;
}
.small {
  display: grid;
  grid-template-rows: repeat(3, 9px);
  align-items: center;
  padding-top: 1px;
}
.small.four {
  grid-template-columns: 12px 12px 14px 8px;
}
.panel-title {
  display: flex;
  justify-content: center;
  height: 7px;
}
.layer-box {
  display: flex;
  flex: 1;
  flex-direction: column;
  gap: 1px;
  max-width: 82px;
  padding-top: 1px;
}
.combo {
  display: flex;
  align-items: center;
  gap: 2px;
  height: 8px;
  padding: 0 1px;
  background: #526078;
}
.combo svg {
  width: 6px;
  height: 6px;
}
.combo select {
  flex: 1;
  min-width: 0;
  height: 8px;
  appearance: none;
}
.combo::after {
  content: "";
  border: 1px solid transparent;
  border-top: 2px solid #e8ebef;
  border-bottom: 0;
}
.swatch {
  width: 6px;
  height: 6px;
  background: #000;
}
.layer-tools {
  display: grid;
  grid-template-columns: repeat(5, 10px);
  grid-template-rows: repeat(2, 9px);
  align-items: center;
}
.props {
  display: grid;
  grid-template-columns: 7px 1fr;
  grid-auto-rows: 8px;
  gap: 1px 2px;
  align-items: center;
  width: 62px;
  padding-top: 1px;
}
.props > svg {
  width: 7px;
  height: 7px;
}
.lined::before {
  content: "";
  width: 24px;
  border-top: 1px solid #c9d0da;
}

/* open drawings */
.file-tabs {
  display: flex;
  height: 11px;
  padding: 1px 10px 0;
  background: #222a37;
  line-height: 10px;
}
.file-tabs a {
  display: flex;
  justify-content: space-between;
  width: 48px;
  padding: 0 4px;
  background: #2c3545;
  border-radius: 2px 2px 0 0;
}
.file-tabs .active {
  padding-left: 6px;
  background: #3b4558;
  color: #fff;
}
.file-tabs button {
  padding: 0 8px;
  font-size: 6px;
}

/* model space */
.canvas {
  position: relative;
  margin: 0 2px;
  background: #dadad8;
}
.viewport-bar {
  position: absolute;
  top: 3px;
  right: 3px;
  left: 1px;
  display: flex;
  justify-content: space-between;
  color: #333;
}
.viewport-buttons {
  display: flex;
  gap: 3px;
}
.viewport-buttons svg {
  width: 5px;
  height: 5px;
}
.drawing {
  width: 100%;
  height: auto;
}
.sheet-edge {
  fill: none;
  stroke: #8c8cd8;
  stroke-width: 1.5;
}
.frame {
  fill: none;
  stroke: #3c3c3c;
  stroke-width: 2;
}
.thin, .dial {
  fill: none;
  stroke: #555;
  stroke-width: .8;
}
.dial {
  fill: #dadad8;
}
.rule {
  fill: none;
  stroke: #222;
}
.dots {
  stroke: #111;
  stroke-width: 2;
  stroke-linecap: round;
}
.note {
  fill: #111;
  font-size: 3px;
  font-style: italic;
  font-weight: bold;
}
.mid, .tag, .head, .compass, .cube-label {
  text-anchor: middle;
}
.tag {
  fill: #1414e0;
  font-size: 4px;
  font-style: italic;
  font-weight: bold;
}
.head {
  fill: #111;
  font-size: 3px;
  font-style: italic;
  font-weight: bold;
}
.ring {
  fill: none;
  stroke: #d0d0ce;
  stroke-width: 4;
  opacity: .5;
}
.cube {
  fill: #e6e6e5;
  stroke: #aaa;
}
.cube-label {
  fill: #777;
  font-size: 5px;
}
.compass {
  fill: #aaa;
  font-size: 7px;
}
.navbar {
  fill: #d2d2d0;
  fill-opacity: .3;
  stroke: #c8c8c6;
}
.nav-icons {
  fill: none;
  stroke: #c6c6c4;
}
.ucs {
  fill: none;
  stroke: #555;
}
.axis {
  fill: #444;
  font-size: 8px;
}

/* sheets and status bar */
.bottom {
  display: flex;
  justify-content: space-between;
  align-items: center;
  height: 11px;
  padding: 0 4px 0 6px;
  background: #222a37;
}
.sheets, .status {
  display: flex;
  align-items: center;
}
.sheets {
  align-self: flex-start;
  line-height: 8px;
}
.sheets a {
  padding: 0 4px;
}
.sheets .active {
  padding: 0 5px;
  background: #3b4558;
  border-radius: 0 0 2px 2px;
  color: #fff;
  font-weight: bold;
}
.sheets button {
  padding: 0 6px;
}
.status {
  gap: 4px;
}
.status .drop {
  gap: 1px;
}
.status .on svg {
  outline: 1px solid #4a86c0;
  background: #4a86c0;
}
```
